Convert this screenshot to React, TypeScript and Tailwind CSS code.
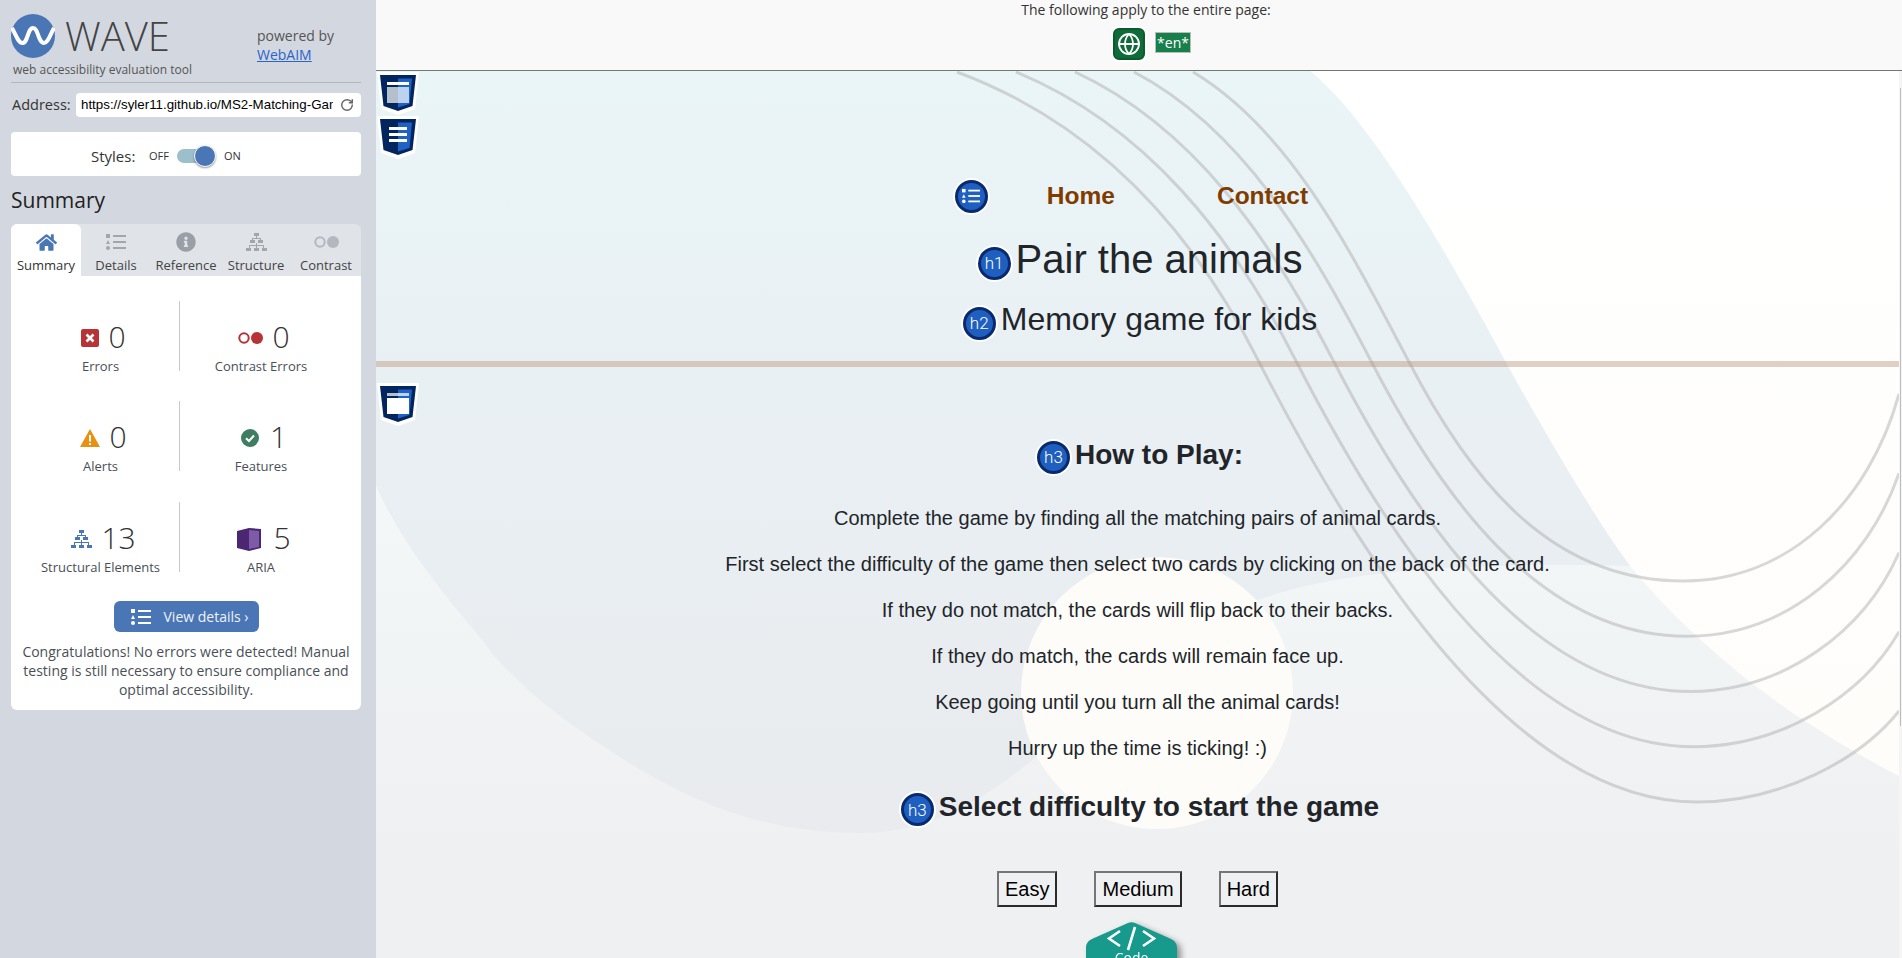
import { RotateCw, Globe } from "lucide-react";
import { FaHome, FaInfoCircle } from "react-icons/fa";

type Pt = [number, number];

// the five grey curves on the page background: outer lines measured, rest interpolated
const lineA: Pt[] = [[957,72],[1100,125],[1195,235],[1258,360],[1340,520],[1500,802],[1697,802],[1780,802],[1860,760],[1899,711]];
const lineB: Pt[] = [[1193,72],[1290,130],[1350,250],[1408,360],[1470,480],[1550,581],[1684,581],[1790,581],[1870,500],[1899,394]];

const toPath = (p: Pt[]) =>
    `M${p[0]} C${p[1]} ${p[2]} ${p[3]} C${p[4]} ${p[5]} ${p[6]} C${p[7]} ${p[8]} ${p[9]}`;

const curves = [0, 0.25, 0.5, 0.75, 1].map((t) =>
    toPath(lineA.map((a, i): Pt => [a[0] + (lineB[i][0] - a[0]) * t, a[1] + (lineB[i][1] - a[1]) * t]))
);

const Background = () => (
    <svg className="absolute inset-0 w-full h-full" viewBox="376 71 1523 887" preserveAspectRatio="none">
        <defs>
            <linearGradient id="cream" gradientUnits="userSpaceOnUse" x1="0" y1="71" x2="0" y2="800">
                <stop offset="0" stopColor="#ffffff" />
                <stop offset="1" stopColor="#fefdfa" />
            </linearGradient>
            <linearGradient id="lower" gradientUnits="userSpaceOnUse" x1="0" y1="480" x2="0" y2="850">
                <stop offset="0" stopColor="#f4f8f9" />
                <stop offset="0.45" stopColor="#f1f4f5" />
                <stop offset="1" stopColor="#eff0f1" />
            </linearGradient>
            <linearGradient id="blob" gradientUnits="userSpaceOnUse" x1="0" y1="71" x2="0" y2="833">
                <stop offset="0" stopColor="#eaf5f7" />
                <stop offset="0.4" stopColor="#e9f0f4" />
                <stop offset="1" stopColor="#e9ebee" />
            </linearGradient>
        </defs>
        <rect x="376" y="71" width="1523" height="887" fill="url(#cream)" />
        <path d="M376 71 L1310 71 C1370 120 1440 240 1509 368 C1560 460 1600 525 1630 566 C1700 650 1790 720 1899 776 L1899 958 L376 958 Z" fill="url(#lower)" />
        <path d="M376 71 L1310 71 C1370 120 1440 240 1509 368 C1560 460 1600 525 1630 566 C1560 565 1400 560 1290 590 C1100 640 1030 833 861 833 C760 833 690 800 631 764 C560 720 510 680 478 635 C440 590 400 540 376 486 Z" fill="url(#blob)" />
        <circle cx="1157" cy="693" r="136" fill="#fdfcf9" />
        {curves.map((d) => (
            <path key={d} d={d} fill="none" stroke="#a8a8a8" strokeOpacity="0.45" strokeWidth="3" />
        ))}
    </svg>
);

const WaveLogo = () => (
    <svg width="44" height="44" viewBox="0 0 44 44" className="shrink-0">
        <circle cx="22" cy="22" r="22" fill="#4a76b5" />
        <path d="M1 14 C5 21 7 29 11.5 29 C17 29 16.5 14 22 14 C27.5 14 27 29 33 29 C37 29 39 21 43 14" fill="none" stroke="#fff" strokeWidth="4" />
    </svg>
);

const ListIcon = ({ color, className }: { color: string; className?: string }) => (
    <svg width="20" height="16" viewBox="0 0 20 16" fill={color} className={className}>
        <rect x="0" y="0" width="4" height="4" />
        <rect x="7" y="1" width="13" height="2" />
        <path d="M2 6 L4 10 L0 10 Z" />
        <rect x="7" y="7" width="13" height="2" />
        <circle cx="2" cy="14" r="2" />
        <rect x="7" y="13" width="13" height="2" />
    </svg>
);

const SitemapIcon = ({ color, w, h }: { color: string; w: number; h: number }) => (
    <svg width={w} height={h} viewBox="0 0 21 19" fill={color}>
        <rect x="8" y="0" width="5" height="3" />
        <rect x="10" y="3" width="1" height="2" />
        <rect x="4" y="7" width="5" height="3" />
        <rect x="12" y="7" width="5" height="3" />
        <rect x="6" y="5" width="9" height="1" />
        <rect x="6" y="5" width="1" height="2" />
        <rect x="14" y="5" width="1" height="2" />
        <rect x="3" y="12" width="15" height="1" />
        <rect x="3" y="12" width="1" height="3" />
        <rect x="10" y="10" width="1" height="5" />
        <rect x="17" y="12" width="1" height="3" />
        <rect x="0" y="15" width="5" height="3" />
        <rect x="8" y="15" width="5" height="3" />
        <rect x="16" y="15" width="5" height="3" />
    </svg>
);

const ErrorIcon = () => (
    <svg width="18" height="18" viewBox="0 0 18 18">
        <rect width="18" height="18" rx="2" fill="#b83336" />
        <path d="M5.5 5.5 L12.5 12.5 M12.5 5.5 L5.5 12.5" stroke="#fff" strokeWidth="2.6" />
    </svg>
);

const ContrastIcon = ({ color, w }: { color: string; w: number }) => (
    <svg width={w} height={(w * 12) / 25} viewBox="0 0 25 12">
        <circle cx="6" cy="6" r="4.7" fill="none" stroke={color} strokeWidth="2" />
        <circle cx="19" cy="6" r="6" fill={color} />
    </svg>
);

const AlertIcon = () => (
    <svg width="20" height="18" viewBox="0 0 20 18">
        <path d="M10 0 L20 18 L0 18 Z" fill="#e8900f" />
        <rect x="9" y="6" width="2" height="6.5" fill="#fff" />
        <rect x="9" y="14" width="2" height="2" fill="#fff" />
    </svg>
);

const FeatureIcon = () => (
    <svg width="18" height="18" viewBox="0 0 18 18">
        <circle cx="9" cy="9" r="9" fill="#3f7d62" />
        <path d="M5 9.2 L8 12 L13 6.5" fill="none" stroke="#fff" strokeWidth="2" />
    </svg>
);

const AriaIcon = () => (
    <svg width="24" height="23" viewBox="0 0 24 23">
        <path d="M0 3 L12 0 L24 1 L24 20 L12 23 L0 20 Z" fill="#4a2673" />
        <path d="M12 2 L22 3 L22 19 L12 21 Z" fill="#7d5ba6" />
    </svg>
);

const Stat = ({ icon, value, label, gap = "gap-[9px]" }: { icon: React.ReactNode; value: string; label: string; gap?: string }) => (
    <div className="flex flex-col items-center h-[70px] pt-[19px]">
        <div className={`flex items-center h-[36px] ml-[6px] ${gap}`}>
            {icon}
            <span className="text-[30px] leading-[34px] mb-[2px] text-[#333] font-light">{value}</span>
        </div>
        <div className="text-[13px] leading-[20px] text-[#4a4f57]">{label}</div>
    </div>
);

const tabs = [
    { label: "Summary", active: true, icon: <FaHome size={21} color="#4a76b5" /> },
    { label: "Details", icon: <ListIcon color="#a3a7ad" /> },
    { label: "Reference", icon: <FaInfoCircle size={20} color="#9a9ea5" /> },
    { label: "Structure", icon: <SitemapIcon color="#a3a7ad" w={21} h={19} /> },
    { label: "Contrast", icon: <ContrastIcon color="#b4b8be" w={25} /> },
];

const SideBar = () => (
    <aside className="w-[376px] shrink-0 h-full bg-[#d3d8e0] pl-[11px] pr-[15px] text-[#333] font-['Open_Sans',sans-serif]">
        <div className="flex h-[83px] border-b border-[#b4b8bd]">
            <div className="w-[246px] pt-[14px]">
                <div className="flex items-center gap-[10px] h-[44px]">
                    <WaveLogo />
                    <span className="text-[40px] leading-[44px] font-light text-[#444]">WAVE</span>
                </div>
                <div className="text-[12px] leading-[20px] mt-[2px] ml-[2px] text-[#555] whitespace-nowrap">web accessibility evaluation tool</div>
            </div>
            <div className="pt-[26px] text-[14px] leading-[19px] text-[#555]">
                <div>powered by</div>
                <a className="text-[#2a63c9] underline">WebAIM</a>
            </div>
        </div>

        <div className="flex items-center h-[24px] mt-[10px]">
            <span className="w-[64px] ml-px text-[14.5px] text-[#333] whitespace-nowrap">Address:</span>
            <div className="flex items-center w-[285px] h-[24px] bg-white rounded-[4px] pl-[5px]">
                <input readOnly value="https://syler11.github.io/MS2-Matching-Game/" className="w-[252px] p-0 bg-transparent outline-none text-[13.33px] text-black font-['Liberation_Sans',sans-serif]" />
                <RotateCw size={14} color="#666" strokeWidth={2.5} className="ml-[7px]" />
            </div>
        </div>

        <div className="flex items-center h-[44px] mt-[15px] pt-[4px] bg-white rounded-[4px] pl-[80px]">
            <span className="text-[15px] text-[#333] w-[58px]">Styles:</span>
            <span className="text-[11px] w-[28px]">OFF</span>
            <span className="relative w-[32px] h-[14px] rounded-full bg-[#9bbfcb]">
                <span className="absolute right-[-7px] top-[-4px] w-[22px] h-[22px] rounded-full bg-[#4a76b5] border border-white shadow-[0_1px_2px_rgba(0,0,0,0.4)]" />
            </span>
            <span className="text-[11px] ml-[15px]">ON</span>
        </div>

        <h2 className="text-[21px] leading-[28px] mt-[10px] text-[#222]">Summary</h2>

        <div className="grid grid-cols-5 h-[52px] mt-[10px] bg-[#e0e3e8] rounded-t-[6px]">
            {tabs.map((tab) => (
                <div key={tab.label} className={`flex flex-col items-center ${tab.active ? "bg-white rounded-t-[6px]" : ""}`}>
                    <div className="flex items-center justify-center h-[26px] mt-[5px]">{tab.icon}</div>
                    <span className={`text-[13px] leading-[20px] ${tab.active ? "text-[#333]" : "text-[#444]"}`}>{tab.label}</span>
                </div>
            ))}
        </div>

        <div className="h-[434px] bg-white rounded-b-[6px] pt-[25px]">
            <div className="grid grid-cols-[158px_162px] ml-[11px] gap-y-[30px]">
                <div className="border-r border-[#c8c8c8]"><Stat icon={<ErrorIcon />} value="0" label="Errors" /></div>
                <Stat icon={<ContrastIcon color="#b83336" w={25} />} value="0" label="Contrast Errors" />
                <div className="border-r border-[#c8c8c8]"><Stat icon={<AlertIcon />} value="0" label="Alerts" /></div>
                <Stat icon={<FeatureIcon />} value="1" label="Features" gap="gap-[11px]" />
                <div className="border-r border-[#c8c8c8] mt-px"><Stat icon={<SitemapIcon color="#4a76b5" w={21} h={19} />} value="13" label="Structural Elements" /></div>
                <div className="mt-px"><Stat icon={<AriaIcon />} value="5" label="ARIA" gap="gap-[12px]" /></div>
            </div>

            <a className="flex items-center w-[145px] h-[31px] mx-auto mt-[29px] pl-[17px] bg-[#4a76b5] rounded-[6px] text-[14px] text-[#eef2f8]">
                <ListIcon color="#fff" />
                <span className="ml-[13px] whitespace-nowrap">View details ›</span>
            </a>
            <p className="mt-[10px] px-[8px] text-center text-[14px] leading-[19px] text-[#4a4f57]">
                Congratulations! No errors were detected! Manual testing is still necessary to ensure compliance and optimal accessibility.
            </p>
        </div>
    </aside>
);

const Shield = ({ kind, className }: { kind: "top" | "list" | "main"; className: string }) => (
    <svg width="42" height="43" viewBox="0 0 42 43" className={`absolute ${className}`}>
        <path d="M0 0 L42 0 L38 37 L21 43 L4 37 Z" fill="#fff" />
        <path d="M3 3 L39 3 L35.5 34 L21 39 L6.5 34 Z" fill="#00255f" />
        <path d="M21 6.5 L35 6.5 L32.5 32 L21 35.5 Z" fill="#1f62c4" />
        {kind === "top" && (
            <>
                <rect x="10" y="10" width="22" height="3" fill="#fff" />
                <rect x="10" y="15" width="11" height="16" fill="#b5c0cd" />
                <rect x="21" y="15" width="11" height="16" fill="#bcd3ef" />
            </>
        )}
        {kind === "list" && (
            <>
                <rect x="12" y="11" width="18" height="3" fill="#fff" />
                <rect x="12" y="17" width="18" height="3" fill="#fff" />
                <rect x="12" y="23" width="18" height="3" fill="#fff" />
            </>
        )}
        {kind === "main" && (
            <>
                <rect x="10" y="10" width="11" height="3" fill="#b5c0cd" />
                <rect x="21" y="10" width="11" height="3" fill="#bcd3ef" />
                <rect x="10" y="15" width="22" height="16" fill="#fff" />
            </>
        )}
    </svg>
);

const Badge = ({ children, className = "" }: { children: React.ReactNode; className?: string }) => (
    <span className={`flex items-center justify-center shrink-0 w-[37px] h-[37px] rounded-full bg-white ${className}`}>
        <span className="flex items-center justify-center w-[33px] h-[33px] rounded-full bg-[#1f5fc0] border-[3px] border-[#0a2a70] text-white text-[17px] font-light font-['Roboto',sans-serif]">
            {children}
        </span>
    </span>
);

const steps = [
    "Complete the game by finding all the matching pairs of animal cards.",
    "First select the difficulty of the game then select two cards by clicking on the back of the card.",
    "If they do not match, the cards will flip back to their backs.",
    "If they do match, the cards will remain face up.",
    "Keep going until you turn all the animal cards!",
    "Hurry up the time is ticking! :)",
];

const PageBtn = ({ label }: { label: string }) => (
    <button className="h-[36px] px-[6px] text-[20px] leading-[32px] text-black border-2 border-t-[#767676] border-l-[#767676] border-r-[#2b2b2b] border-b-[#2b2b2b]">
        {label}
    </button>
);

const PageContent = () => (
    <main className="relative flex-1 overflow-hidden font-['Liberation_Sans',sans-serif] text-[#212529]">
        <Background />
        <Shield kind="top" className="left-px top-px" />
        <Shield kind="list" className="left-px top-[45px]" />
        <Shield kind="main" className="left-px top-[312px]" />

        <div className="relative flex flex-col items-center pt-[105px]">
            <nav className="flex items-center h-[40px] pr-[14px]">
                <Badge>
                    <ListIcon color="#fff" className="scale-90" />
                </Badge>
                <a className="ml-[57px] pt-px text-[24.5px] font-bold text-[#803c00]">Home</a>
                <a className="ml-[102px] pt-px text-[24.5px] font-bold text-[#803c00]">Contact</a>
            </nav>
            <h1 className="flex items-center gap-[3px] h-[48px] mt-[19px] ml-[3px] text-[40px] leading-[48px]">
                <Badge className="mt-[8px]">h1</Badge>
                Pair the animals
            </h1>
            <h2 className="flex items-center gap-[3px] h-[40px] mt-[16px] ml-[3px] text-[32px] leading-[40px]">
                <Badge className="mt-[8px]">h2</Badge>
                Memory game for kids
            </h2>
            <div className="w-full h-[6px] mt-[22px] bg-[#b48c6e]/40" />
            <h3 className="flex items-center gap-[3px] h-[36px] mt-[70px] ml-[3px] text-[28px] leading-[36px] font-bold">
                <Badge className="mt-[4px]">h3</Badge>
                How to Play:
            </h3>
            <div className="flex flex-col gap-4 mt-[30px] text-center text-[20px] leading-[30px]">
                {steps.map((step) => (
                    <p key={step}>{step}</p>
                ))}
            </div>
            <h3 className="flex items-center gap-[3px] h-[36px] mt-[26px] ml-[3px] text-[28px] leading-[36px] font-bold">
                <Badge className="mt-[5px]">h3</Badge>
                Select difficulty to start the game
            </h3>
            <div className="flex gap-[37px] mt-[46px]">
                <PageBtn label="Easy" />
                <PageBtn label="Medium" />
                <PageBtn label="Hard" />
            </div>
        </div>

        <div className="absolute left-[710px] top-[851px] w-[91px] h-[60px] drop-shadow-[4px_3px_3px_rgba(0,0,0,0.4)]">
            <svg width="91" height="60" viewBox="0 0 91 60" className="absolute inset-0">
                <path d="M0 26 C0 21 3 18 7 16.5 L42 1 C44 0 47 0 49 1 L84 16.5 C88 18 91 21 91 26 L91 60 L0 60 Z" fill="#17998c" />
                <path d="M34 9 L23 16.5 L34 24 M57 9 L68 16.5 L57 24 M49 5 L42 28" fill="none" stroke="#fff" strokeWidth="2.6" />
            </svg>
            <span className="absolute left-0 right-0 top-[27px] text-center text-[14px] leading-[18px] text-white font-['Open_Sans',sans-serif]">Code</span>
        </div>
    </main>
);

export default function App() {
    return (
        <div className="flex w-[1902px] h-screen overflow-hidden bg-white">
            <SideBar />
            <div className="flex flex-col flex-1 min-w-0">
                <header className="flex flex-col items-center h-[71px] shrink-0 pt-[1px] bg-[#f9f9f9] border-b border-[#6f7a72] font-['Open_Sans',sans-serif]">
                    <p className="ml-[14px] text-[14px] leading-[18px] text-[#333]">The following apply to the entire page:</p>
                    <div className="flex items-center gap-[8px] mt-[7px] ml-[24px]">
                        <span className="flex items-center justify-center w-[36px] h-[36px] rounded-[8px] bg-white">
                            <span className="flex items-center justify-center w-[32px] h-[32px] rounded-[6px] bg-[#0f6b3a] border-[2px] border-[#0a5c2e]">
                                <Globe size={24} color="#fff" strokeWidth={1.8} />
                            </span>
                        </span>
                        <span className="h-[21px] mb-[3px] px-px bg-[#17804a] border border-[#bbb] text-[14px] leading-[19px] text-white">*en*</span>
                    </div>
                </header>
                <div className="flex flex-1 min-h-0">
                    <PageContent />
                    <div className="w-[3px] shrink-0 bg-[#f5f5f5] pt-[17px]">
                        <div className="w-px h-[638px] ml-px bg-[#bdbdbd]" />
                    </div>
                </div>
            </div>
        </div>
    );
}
